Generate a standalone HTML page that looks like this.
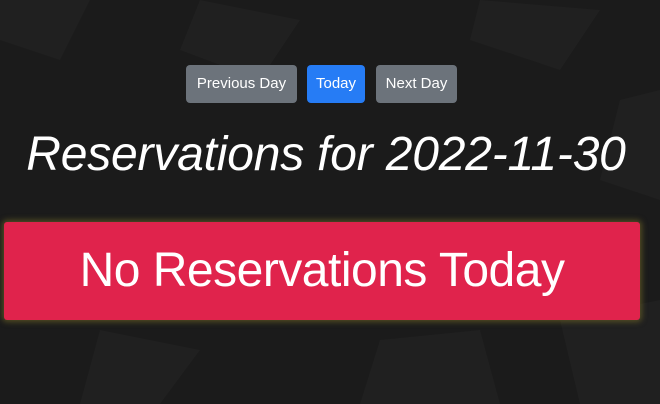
<!DOCTYPE html>
<html><head><meta charset="utf-8"><style>
html,body{margin:0;padding:0;}
body{width:660px;height:404px;overflow:hidden;background:#1b1b1b;font-family:"Liberation Sans",Arial,sans-serif;position:relative;}
.bg{position:absolute;inset:0;}
.btn{position:absolute;top:65px;height:38px;border-radius:4px;color:#fff;font-size:15px;line-height:38px;text-align:center;}
.g{background:#6c737b;}
.b{background:#267cf5;}
h1{position:absolute;left:0;width:652px;top:127px;margin:0;text-align:center;color:#fff;font-style:italic;font-weight:normal;font-size:48px;letter-spacing:-0.2px;line-height:56px;}
.red{position:absolute;left:4px;top:222px;width:636px;height:98px;background:#e0234c;border-radius:3px;box-shadow:0 0 6px 2px rgba(120,110,40,0.6);color:#fff;font-size:48px;letter-spacing:-0.5px;text-align:center;line-height:98px;}
</style></head><body>
<svg class="bg" width="660" height="404">
<g fill="#202020">
<polygon points="0,0 90,0 60,60 0,40"/>
<polygon points="200,0 300,20 260,80 180,50"/>
<polygon points="480,0 600,10 560,70 470,40"/>
<polygon points="100,330 200,350 160,404 80,404"/>
<polygon points="380,340 480,330 500,404 360,404"/>
<polygon points="560,320 660,300 660,404 580,404"/>
<polygon points="620,100 660,90 660,200 600,180"/>
</g></svg>
<div class="btn g" style="left:186px;width:111px">Previous Day</div>
<div class="btn b" style="left:307px;width:58px">Today</div>
<div class="btn g" style="left:376px;width:81px">Next Day</div>
<h1>Reservations for 2022-11-30</h1>
<div class="red">No Reservations Today</div>
</body></html>
